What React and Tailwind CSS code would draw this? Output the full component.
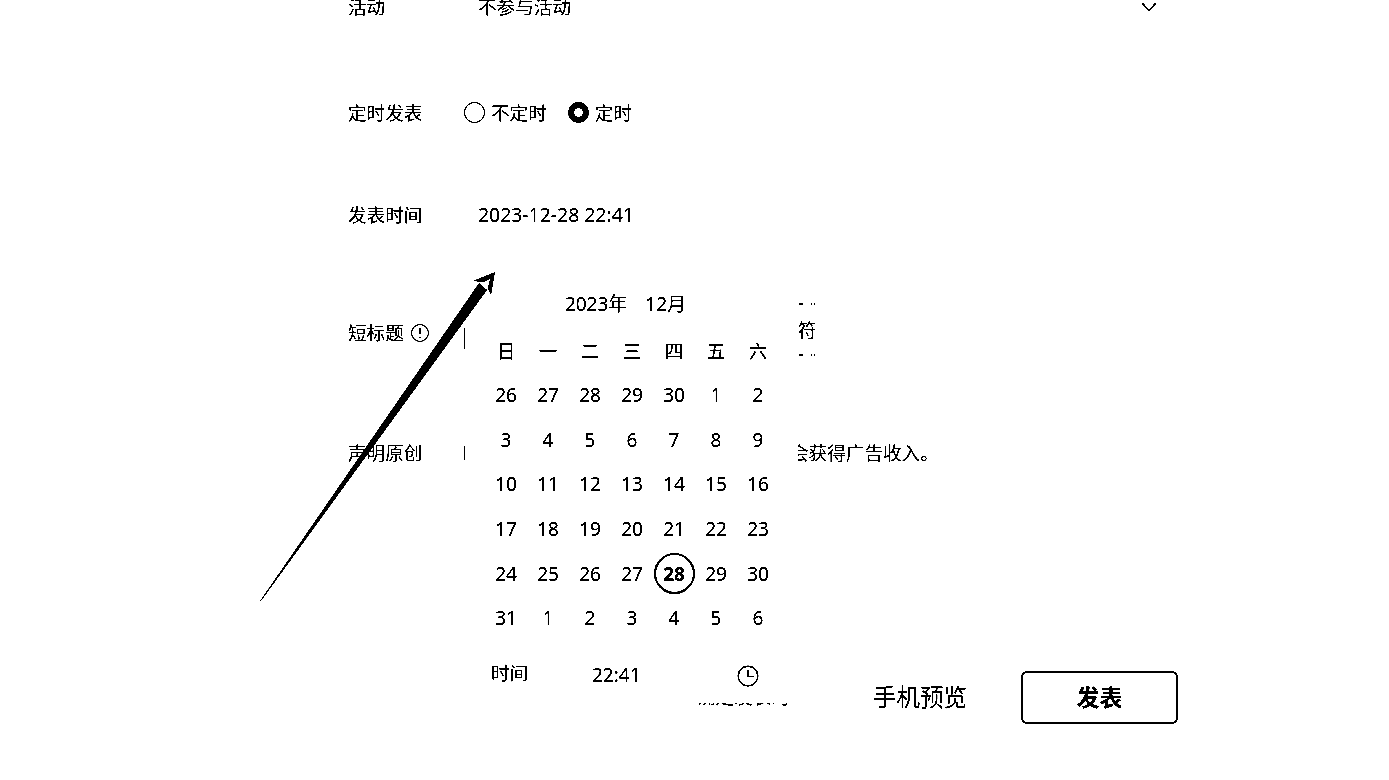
import React from 'react'

const WEEK = ['日', '一', '二', '三', '四', '五', '六']
const DAYS = [
  26, 27, 28, 29, 30, 1, 2,
  3, 4, 5, 6, 7, 8, 9,
  10, 11, 12, 13, 14, 15, 16,
  17, 18, 19, 20, 21, 22, 23,
  24, 25, 26, 27, 28, 29, 30,
  31, 1, 2, 3, 4, 5, 6,
]
const SELECTED = 32

const Row = ({ label, children, className = '' }) => (
  <div className={`flex h-[30px] items-center ${className}`}>
    <div className="flex w-[116px] shrink-0 items-center">{label}</div>
    {children}
  </div>
)

const Radio = ({ checked, children }) => (
  <label className="flex items-center gap-[6px]">
    <span className={`h-[21px] w-[21px] rounded-full border-black bg-white ${checked ? 'border-[6px]' : 'border'}`} />
    {children}
  </label>
)

const App = () => {
  return (
    <div className="relative h-[780px] overflow-hidden bg-white text-[18.6px] text-black brightness-[0.85] contrast-[20] [font-family:'Noto_Sans','Noto_Sans_CJK_SC',sans-serif]">
      <div className="ml-[348px] -mt-[8px] w-[830px]">
        <Row label="活动">
          <span className="pl-[14px]">不参与活动</span>
          <svg className="ml-auto mr-[20px]" width="18" height="12" viewBox="0 0 18 12" fill="none" stroke="black" strokeWidth="1.6">
            <path d="M2 2 L9 9.5 L16 2" />
          </svg>
        </Row>
        <Row label="定时发表" className="mt-[76px]">
          <div className="flex items-center gap-[21px]">
            <Radio>不定时</Radio>
            <Radio checked>定时</Radio>
          </div>
        </Row>
        <Row label="发表时间" className="mt-[72px]">
          <span className="pl-[14px] text-[19.4px]">2023-12-28 22:41</span>
        </Row>
        <Row
          label={
            <>
              短标题
              <svg className="ml-[6px]" width="20" height="20" viewBox="0 0 20 20" fill="none" stroke="black" strokeWidth="1">
                <circle cx="10" cy="10" r="8.4" />
                <path d="M10 5 V11.5 M10 13.5 V15" />
              </svg>
            </>
          }
          className="mt-[88px]"
        >
          <span className="mt-[10px] h-[21px] w-px bg-black" />
        </Row>
        <Row label="声明原创" className="mt-[90px]">
          <span className="h-[14px] w-px bg-black" />
          <span className="ml-[325px] w-[140px] whitespace-nowrap">会获得广告收入。</span>
        </Row>
        <div className="mt-[203px] flex items-center justify-end gap-[54px]">
          <span className="text-[23.5px]">手机预览</span>
          <button className="h-[53px] w-[157px] rounded-[6px] border-2 border-black text-[23px] font-bold">发表</button>
        </div>
      </div>

      {/* clipped bits left of the popup's right edge */}
      <div className="absolute left-[799px] top-[303px] flex h-[2px] w-[16px] justify-between">
        <span className="w-[4px] bg-black" />
        <span className="w-[4px] border-x border-black" />
      </div>
      <div className="absolute left-[798px] top-[316px] h-[24px] w-[17px] overflow-hidden">符</div>
      <div className="absolute left-[799px] top-[354px] flex h-[2px] w-[16px] justify-between">
        <span className="w-[4px] bg-black" />
        <span className="w-[4px] border-x border-black" />
      </div>
      <div className="absolute left-[697px] top-[703px] h-[6px] w-[92px] overflow-hidden">
        <div className="-mt-[20px] whitespace-nowrap">确定发表时间</div>
      </div>

      {/* date popover */}
      <div className="absolute left-[470px] top-[280px] h-[423px] w-[328px] bg-white pl-[15px]">
        <div className="flex h-[48.5px] items-center justify-center gap-[18px] pr-[32px] text-[19px]">
          <span>2023年</span>
          <span>12月</span>
        </div>
        <div className="grid grid-cols-[repeat(7,42px)] auto-rows-[44.6px] text-[19px]">
          {WEEK.map((w) => (
            <div key={w} className="flex items-center justify-center text-[18.6px]">{w}</div>
          ))}
          {DAYS.map((d, i) => (
            <div key={i} className="flex items-center justify-center">
              {i === SELECTED ? (
                <span className="flex h-[41px] w-[41px] items-center justify-center rounded-full border-2 border-black font-bold">{d}</span>
              ) : (
                d
              )}
            </div>
          ))}
        </div>
        <div className="mt-[20px] flex h-[30px] items-center pl-[6px]">
          <span className="-mt-[6px] w-[101px]">时间</span>
          <span className="text-[19px]">22:41</span>
          <svg className="ml-[96px]" width="22" height="22" viewBox="0 0 22 22" fill="none" stroke="black" strokeWidth="1.4">
            <circle cx="11" cy="11" r="9.8" />
            <path d="M11 5 V11.5 H16.5" />
          </svg>
        </div>
      </div>

      {/* arrow annotation */}
      <svg className="absolute left-[255px] top-[265px]" width="245" height="340" viewBox="255 265 245 340" fill="black">
        <path d="M260 601 L479 283 L487 290 L261 601 Z" />
        <path d="M495 272 L473 281 L482 282 L487 286 L491 295 Z" />
        <path d="M482 283 L490 279 L488 287 Z" fill="white" />
      </svg>
    </div>
  )
}

export default App
